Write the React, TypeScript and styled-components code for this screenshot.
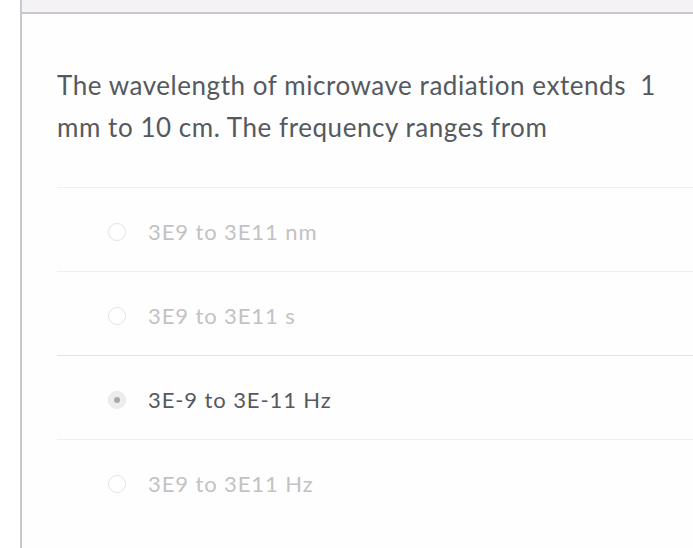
import React from "react";
import styled, { createGlobalStyle } from "styled-components";

const Global = createGlobalStyle`
  html, body { margin: 0; padding: 0; background: #ffffff; }
  body { font-family: Lato, "Open Sans", "Liberation Sans", sans-serif; overflow: hidden; }
`;

const Page = styled.div`
  display: flex;
  height: 548px;
  width: 693px;
  overflow: hidden;
`;

const Gutter = styled.div`
  width: 20px;
  flex: none;
  background: #ffffff;
`;

const Main = styled.div`
  flex: 1;
  display: flex;
  flex-direction: column;
  border-left: 2px solid #c9c9cb;
  background: #fefefe;
  min-width: 0;
`;

const TopBar = styled.div`
  height: 12px;
  flex: none;
  background: #f4f2f5;
  border-bottom: 2px solid #c8c8ca;
`;

const Content = styled.div`
  padding: 50px 0 0 35px;
  margin-right: -40px;
`;

const Question = styled.p`
  margin: 0 0 39px;
  font-size: 26px;
  letter-spacing: 0.55px;
  line-height: 42px;
  color: #55595e;
  width: 625px;
`;

const OptionList = styled.div`
  display: flex;
  flex-direction: column;
`;

const OptionRow = styled.label<{ $line: string }>`
  display: flex;
  align-items: center;
  box-sizing: border-box;
  height: 84px;
  padding-top: 4px;
  border-top: 1px solid ${(p) => p.$line};
  padding-left: 51px;
  gap: 22px;
`;

const Radio = styled.span<{ $checked: boolean }>`
  width: 18px;
  height: 18px;
  box-sizing: border-box;
  border-radius: 50%;
  border: 1px solid ${(p) => (p.$checked ? "#e8e8e8" : "#e4e4e4")};
  background: ${(p) => (p.$checked ? "#ededed" : "#ffffff")};
  display: flex;
  align-items: center;
  justify-content: center;
  flex: none;
  &::after {
    content: "";
    width: 6px;
    height: 6px;
    border-radius: 50%;
    background: ${(p) => (p.$checked ? "#a9a9a9" : "transparent")};
  }
`;

const OptionText = styled.span<{ $checked: boolean }>`
  font-size: 22px;
  letter-spacing: 0.9px;
  color: ${(p) => (p.$checked ? "#56595e" : "#c2c2c4")};
  line-height: 24px;
`;

const options = [
  { text: "3E9 to 3E11 nm", checked: false, line: "#efefef" },
  { text: "3E9 to 3E11 s", checked: false, line: "#efefef" },
  { text: "3E-9 to 3E-11 Hz", checked: true, line: "#e3e3e5" },
  { text: "3E9 to 3E11 Hz", checked: false, line: "#efefef" },
];

export default function App() {
  return (
    <>
      <Global />
      <Page>
        <Gutter />
        <Main>
          <TopBar />
          <Content>
            <Question>
              The wavelength of microwave radiation extends&nbsp; 1 mm to 10 cm. The frequency ranges from
            </Question>
            <OptionList>
              {options.map((o) => (
                <OptionRow key={o.text} $line={o.line}>
                  <Radio $checked={o.checked} />
                  <OptionText $checked={o.checked}>{o.text}</OptionText>
                </OptionRow>
              ))}
            </OptionList>
          </Content>
        </Main>
      </Page>
    </>
  );
}
